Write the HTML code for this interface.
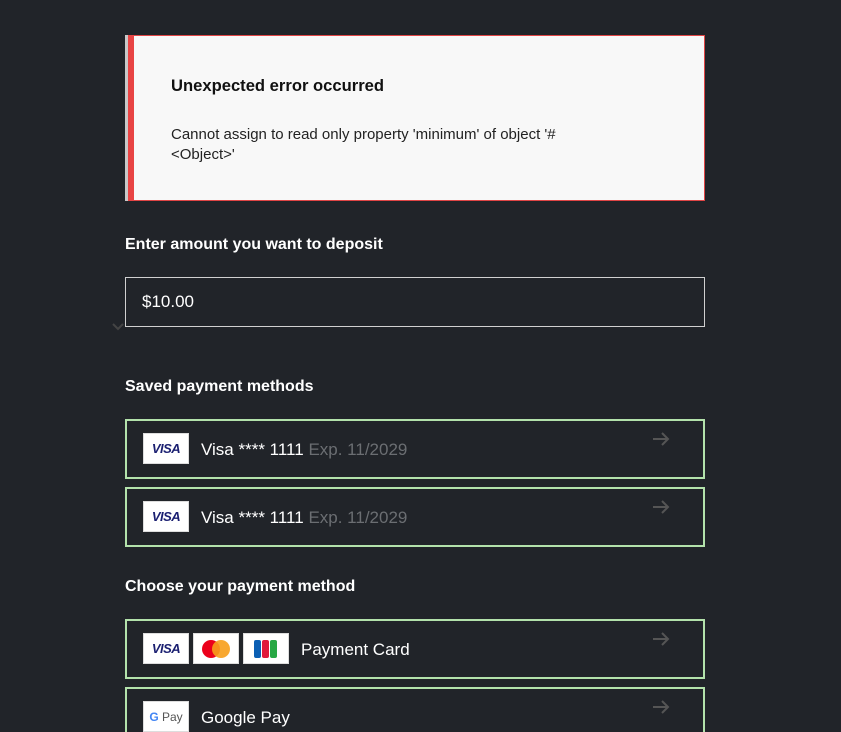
<!DOCTYPE html>
<html><head><style>
html,body{margin:0;height:732px;overflow:hidden}
body{background:#212429;width:841px;font-family:"Liberation Sans",sans-serif;color:#fff;position:relative}
.err{position:absolute;left:125px;top:35px;width:579px;height:164px;background:#f8f8f8;border:1px solid #e04545;border-left:none;}
.err:before{content:"";position:absolute;left:0;top:-1px;bottom:-1px;width:3px;background:#c8c8c8}
.err:after{content:"";position:absolute;left:3px;top:-1px;bottom:-1px;width:6px;background:#e84444}
.err h3{position:absolute;left:46px;top:40px;margin:0;font-size:16.6px;color:#111;font-weight:bold}
.err p{position:absolute;left:46px;top:89px;margin:0;font-size:15px;line-height:20px;color:#222;width:460px}
.lbl{position:absolute;left:125px;font-size:16px;font-weight:bold}
.inp{position:absolute;left:125px;top:277px;width:578px;height:48px;border:1px solid #d0d0d0;box-sizing:content-box}
.inp span{position:absolute;left:16px;top:14px;font-size:17px}
.card{position:absolute;left:125px;width:576px;height:56px;border:2px solid #b3e2ab}
.logo{position:absolute;top:12px;width:44px;height:29px;background:#fff;border:1px solid #ddd;display:flex;align-items:center;justify-content:center}
.visa{color:#1a1f71;font-weight:bold;font-style:italic;font-size:13px;letter-spacing:-0.5px}
.t{position:absolute;left:74px;top:19px;font-size:17px}
.t i{font-style:normal;color:#6b6e72}
.arr{position:absolute;left:524px;top:8px}
</style></head><body>
<div class="err"><h3>Unexpected error occurred</h3><p>Cannot assign to read only property 'minimum' of object '#<br>&lt;Object&gt;'</p></div>
<div class="lbl" style="top:236px">Enter amount you want to deposit</div>
<div class="inp"><span>$10.00</span></div>
<svg style="position:absolute;left:112px;top:323px" width="12" height="8"><path d="M1 1l5 5 5-5" stroke="#444" stroke-width="2" fill="none"/></svg>
<div class="lbl" style="top:378px">Saved payment methods</div>
<div class="card" style="top:419px"><div class="logo" style="left:16px"><span class="visa">VISA</span></div><div class="t">Visa **** 1111 <i>Exp. 11/2029</i></div><svg class="arr" width="20" height="20"><path d="M2 10h15M11 4l6 6-6 6" stroke="#555" stroke-width="2" fill="none"/></svg></div>
<div class="card" style="top:487px"><div class="logo" style="left:16px"><span class="visa">VISA</span></div><div class="t">Visa **** 1111 <i>Exp. 11/2029</i></div><svg class="arr" width="20" height="20"><path d="M2 10h15M11 4l6 6-6 6" stroke="#555" stroke-width="2" fill="none"/></svg></div>
<div class="lbl" style="top:578px">Choose your payment method</div>
<div class="card" style="top:619px"><div class="logo" style="left:16px"><span class="visa">VISA</span></div>
<div class="logo" style="left:66px"><svg width="30" height="20"><circle cx="10" cy="10" r="9" fill="#eb001b"/><circle cx="20" cy="10" r="9" fill="#f79e1b" opacity=".9"/></svg></div>
<div class="logo" style="left:116px"><svg width="24" height="20"><rect x="0" y="1" width="7" height="18" rx="2" fill="#0b5fb4"/><rect x="8" y="1" width="7" height="18" rx="2" fill="#e0193c"/><rect x="16" y="1" width="7" height="18" rx="2" fill="#27a844"/></svg></div>
<div class="t" style="left:174px">Payment Card</div><svg class="arr" width="20" height="20"><path d="M2 10h15M11 4l6 6-6 6" stroke="#555" stroke-width="2" fill="none"/></svg></div>
<div class="card" style="top:687px"><div class="logo" style="left:16px;font-size:12px;color:#555"><b style="color:#4285f4">G</b>&nbsp;Pay</div><div class="t">Google Pay</div><svg class="arr" width="20" height="20"><path d="M2 10h15M11 4l6 6-6 6" stroke="#555" stroke-width="2" fill="none"/></svg></div>
</body></html>
